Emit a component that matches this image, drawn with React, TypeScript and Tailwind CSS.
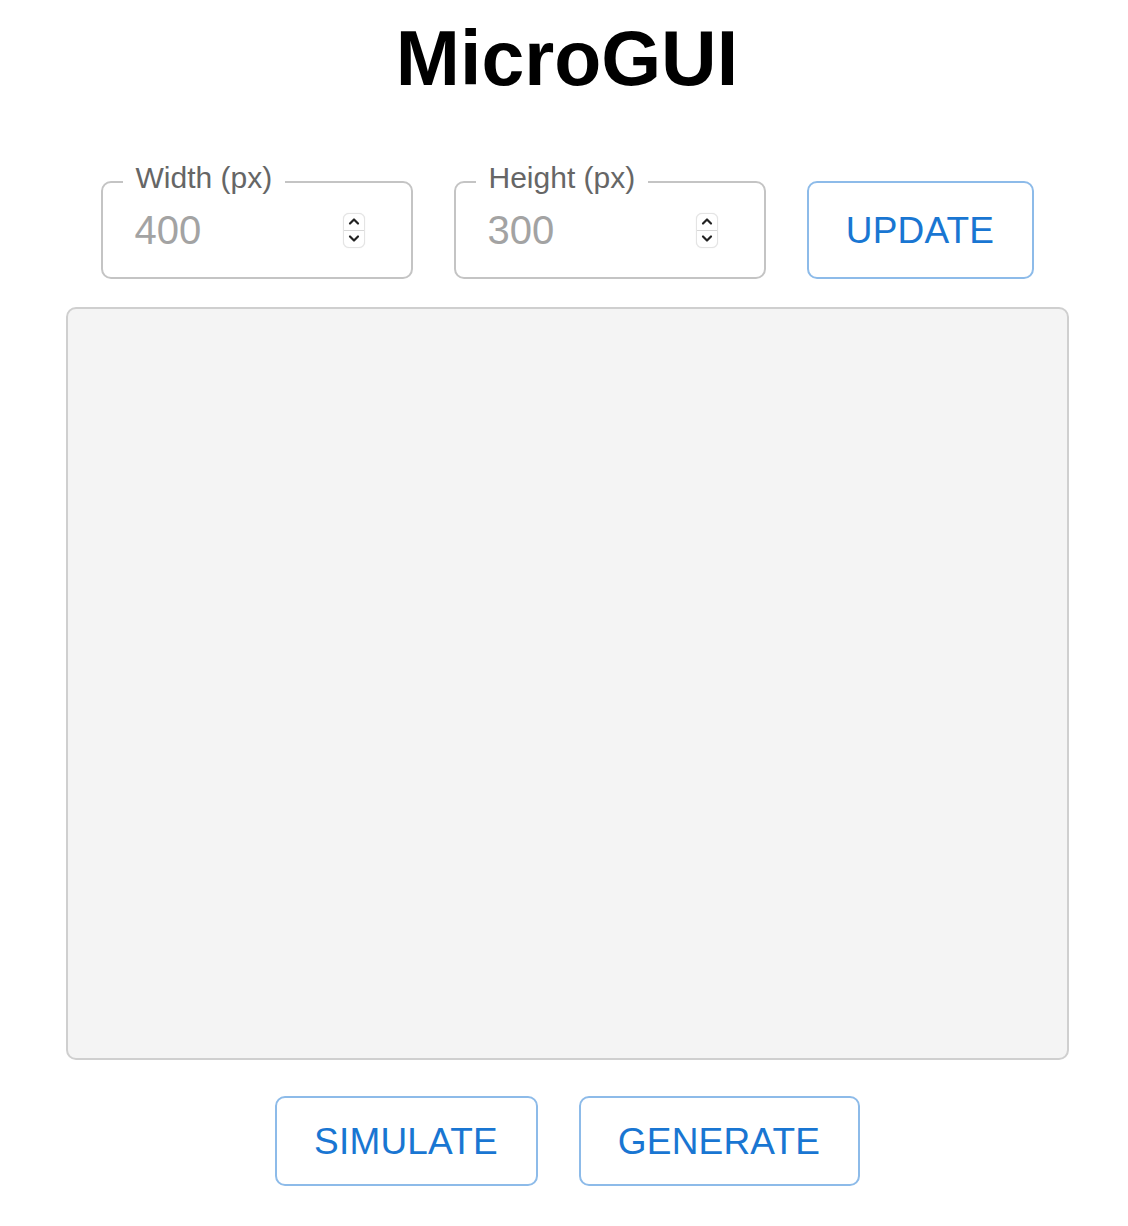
import React from "react";

function Spinner() {
  return (
    <div className="flex h-[35px] w-[22px] flex-col items-center rounded-[6px] border border-[#e4e4e4] bg-white shadow-[0_0_1px_rgba(0,0,0,0.15)]">
      <div className="flex flex-1 items-center justify-center">
        <svg width="12" height="9" viewBox="0 0 12 9" fill="none">
          <path d="M2 6.5 L6 2.5 L10 6.5" stroke="#222" strokeWidth="2.2" strokeLinecap="round" strokeLinejoin="round" />
        </svg>
      </div>
      <div className="h-px w-full bg-[#d8d8d8]" />
      <div className="flex flex-1 items-center justify-center">
        <svg width="12" height="9" viewBox="0 0 12 9" fill="none">
          <path d="M2 2.5 L6 6.5 L10 2.5" stroke="#222" strokeWidth="2.2" strokeLinecap="round" strokeLinejoin="round" />
        </svg>
      </div>
    </div>
  );
}

function NumField({ label, value }: { label: string; value: string }) {
  return (
    <div className="relative flex h-[98px] w-[312px] items-center justify-between rounded-[10px] border-2 border-[#c4c4c4] pl-[32px] pr-[46px]">
      <span className="absolute left-[20px] top-[-5px] -translate-y-1/2 bg-white px-[13px] text-[30px] leading-none text-[#666]">
        {label}
      </span>
      <span className="text-[40px] leading-none text-[#a3a3a3]">{value}</span>
      <Spinner />
    </div>
  );
}

export default function App() {
  return (
    <div className="flex min-h-[1226px] w-full flex-col items-center bg-white pl-[6px] font-['Liberation_Sans',Arial,sans-serif]">
      <h1 className="mt-[20px] text-[77px] font-bold leading-none text-black">MicroGUI</h1>
      <div className="mt-[84px] flex items-center gap-[41px]">
        <NumField label="Width (px)" value="400" />
        <NumField label="Height (px)" value="300" />
        <button className="flex h-[98px] w-[227px] items-center justify-center rounded-[10px] border-2 border-[#8dbbe9] bg-white text-[37px] leading-none tracking-[0.2px] text-[#1976d2]">
          UPDATE
        </button>
      </div>
      <div className="mt-[28px] h-[753px] w-[1003px] rounded-[10px] border-2 border-[#cfcfcf] bg-[#f4f4f4]" />
      <div className="mt-[36px] flex gap-[41px]">
        <button className="flex h-[90px] w-[263px] items-center justify-center rounded-[10px] border-2 border-[#8dbbe9] bg-white text-[37px] leading-none tracking-[0.2px] text-[#1976d2]">
          SIMULATE
        </button>
        <button className="flex h-[90px] w-[281px] items-center justify-center rounded-[10px] border-2 border-[#8dbbe9] bg-white text-[37px] leading-none tracking-[0.2px] text-[#1976d2]">
          GENERATE
        </button>
      </div>
    </div>
  );
}
